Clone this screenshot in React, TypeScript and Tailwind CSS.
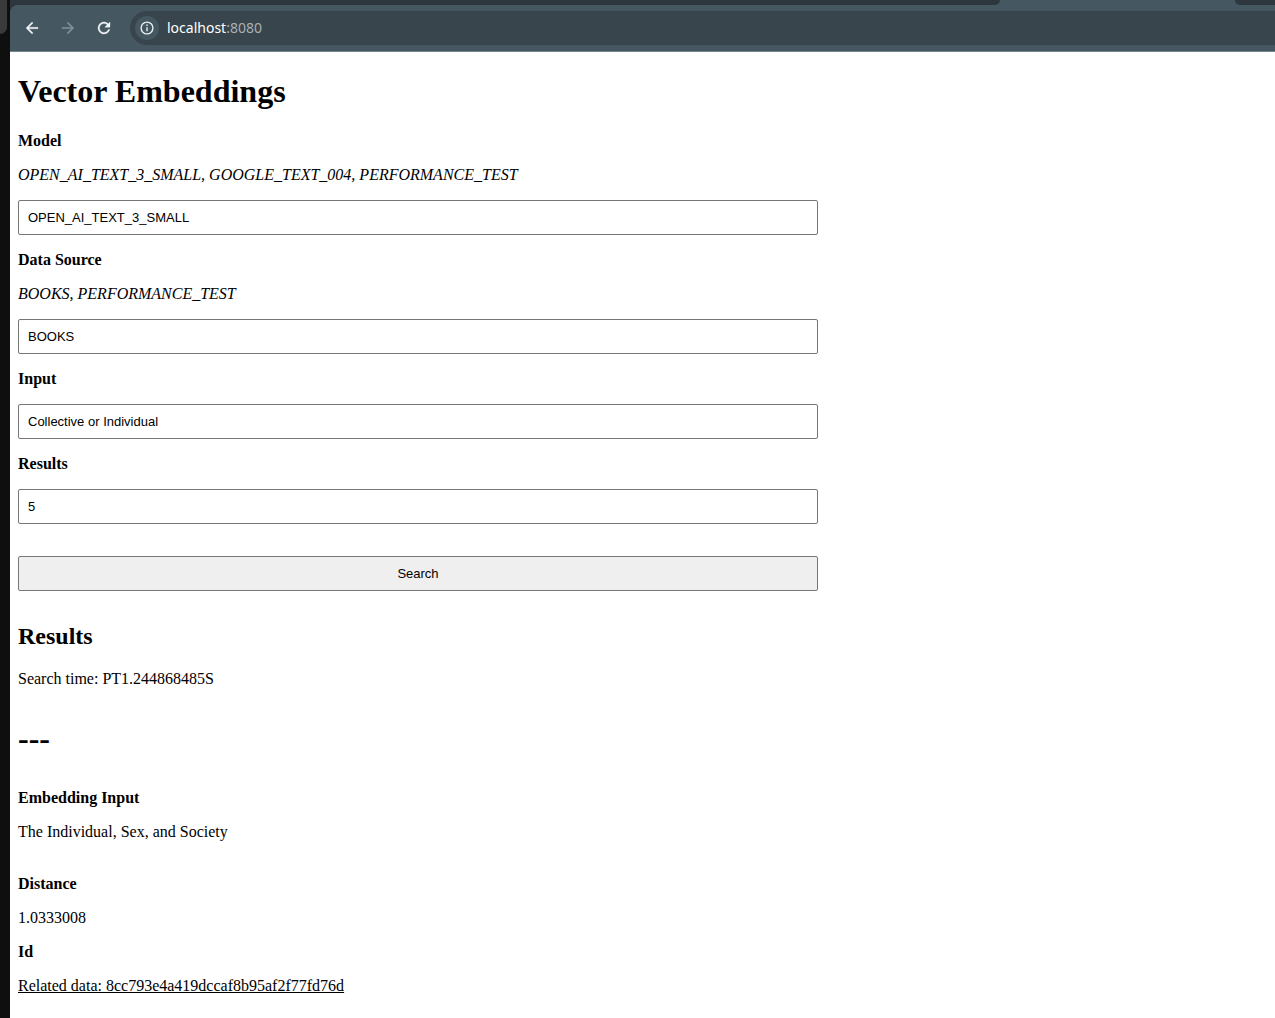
import { useState } from "react";

type FieldProps = { id: string; label: string; hint?: string; initial: string };

function Field({ id, label, hint, initial }: FieldProps) {
  const [value, setValue] = useState(initial);
  return (
    <div className="flex flex-col gap-4">
      <label htmlFor={id} className="font-bold">{label}</label>
      {hint && <p className="italic">{hint}</p>}
      <input
        id={id}
        type="text"
        value={value}
        onChange={(e) => setValue(e.target.value)}
        className="h-[35px] w-full rounded-[2px] border border-[#767676] bg-white px-[9px] font-['Liberation_Sans',sans-serif] text-[13px]"
      />
    </div>
  );
}

function BrowserBar() {
  return (
    <header className="bg-[#2d373d] font-['Noto_Sans',sans-serif]">
      <div className="flex h-[5px] bg-[#455760]">
        <div className="flex-1 rounded-br-[10px] bg-[#2d373d]" />
        <div className="w-[235px]" />
        <div className="w-10 rounded-bl-[10px] bg-[#2d373d]" />
      </div>
      <div className="flex h-[47px] items-center rounded-tl-lg border-b border-[#75838a] bg-[#455760] pl-[13px]">
        <div className="flex gap-[18px]">
          <button aria-label="Back" className="text-[#f1f5f7]">
            <svg width="18" height="18" viewBox="0 0 24 24" fill="currentColor">
              <path d="M20 11H7.83l5.59-5.59L12 4l-8 8 8 8 1.41-1.41L7.83 13H20v-2z" stroke="currentColor" strokeWidth="0.4" />
            </svg>
          </button>
          <button aria-label="Forward" className="text-[#7f8f96]">
            <svg width="18" height="18" viewBox="0 0 24 24" fill="currentColor">
              <path d="M12 4l-1.41 1.41L16.17 11H4v2h12.17l-5.58 5.59L12 20l8-8-8-8z" stroke="currentColor" strokeWidth="0.4" />
            </svg>
          </button>
          <button aria-label="Reload" className="text-[#f1f5f7]">
            <svg width="18" height="18" viewBox="0 0 24 24" fill="currentColor">
              <path d="M17.65 6.35C16.2 4.9 14.21 4 12 4c-4.42 0-7.99 3.58-7.99 8s3.57 8 7.99 8c3.73 0 6.84-2.55 7.73-6h-2.08c-.82 2.33-3.04 4-5.65 4-3.31 0-6-2.69-6-6s2.69-6 6-6c1.66 0 3.14.69 4.22 1.78L13 11h7V4l-2.35 2.35z" stroke="currentColor" strokeWidth="0.4" />
            </svg>
          </button>
        </div>
        <div className="ml-[17px] flex h-[34px] flex-1 items-center rounded-l-full bg-[#38454c] pl-[5px]">
          <button aria-label="Site information" className="flex size-6 items-center justify-center rounded-full bg-[#455760] text-[#e8eef1]">
            <svg width="14" height="14" viewBox="0 0 14 14" fill="none" stroke="currentColor" strokeWidth="1.4">
              <circle cx="7" cy="7" r="5.9" />
              <path d="M7 6.2v4M7 3.6v1.5" />
            </svg>
          </button>
          <div className="ml-2 text-[14px] leading-5 text-[#a9b0b3]">
            <span className="text-white">localhost</span>:8080
          </div>
        </div>
      </div>
    </header>
  );
}

export default function App() {
  return (
    <div className="flex min-h-screen bg-[#0f0f0f] text-black">
      <div className="w-[10px] shrink-0">
        <div className="h-[34px] w-[7px] rounded-br-[7px] bg-[#3a3a3a]" />
      </div>
      <div className="min-w-0 flex-1 bg-white">
        <BrowserBar />
        <main className="px-2 pt-[21px] pb-6 font-['Liberation_Serif',serif] text-[16px] leading-[18px]">
          <h1 className="mb-[22px] text-[32px] leading-[37px] font-bold">Vector Embeddings</h1>
          <form className="flex max-w-[800px] flex-col gap-4" onSubmit={(e) => e.preventDefault()}>
            <Field id="model" label="Model" hint="OPEN_AI_TEXT_3_SMALL, GOOGLE_TEXT_004, PERFORMANCE_TEST" initial="OPEN_AI_TEXT_3_SMALL" />
            <Field id="source" label="Data Source" hint="BOOKS, PERFORMANCE_TEST" initial="BOOKS" />
            <Field id="input" label="Input" initial="Collective or Individual" />
            <Field id="count" label="Results" initial="5" />
            <button
              type="submit"
              className="mt-4 h-[35px] rounded-[2px] border border-[#767676] bg-[#efefef] font-['Liberation_Sans',sans-serif] text-[13px]"
            >
              Search
            </button>
          </form>
          <h2 className="mt-8 mb-5 text-[24px] leading-[27px] font-bold">Results</h2>
          <p>Search time: PT1.244868485S</p>
          <h1 className="my-8 text-[32px] leading-[37px] font-bold">---</h1>
          <section className="flex flex-col gap-4">
            <h3 className="font-bold">Embedding Input</h3>
            <p className="mb-[18px]">The Individual, Sex, and Society</p>
            <h3 className="font-bold">Distance</h3>
            <p>1.0333008</p>
            <h3 className="font-bold">Id</h3>
            <p>
              <a href="#related" className="underline">Related data: 8cc793e4a419dccaf8b95af2f77fd76d</a>
            </p>
          </section>
        </main>
      </div>
    </div>
  );
}
